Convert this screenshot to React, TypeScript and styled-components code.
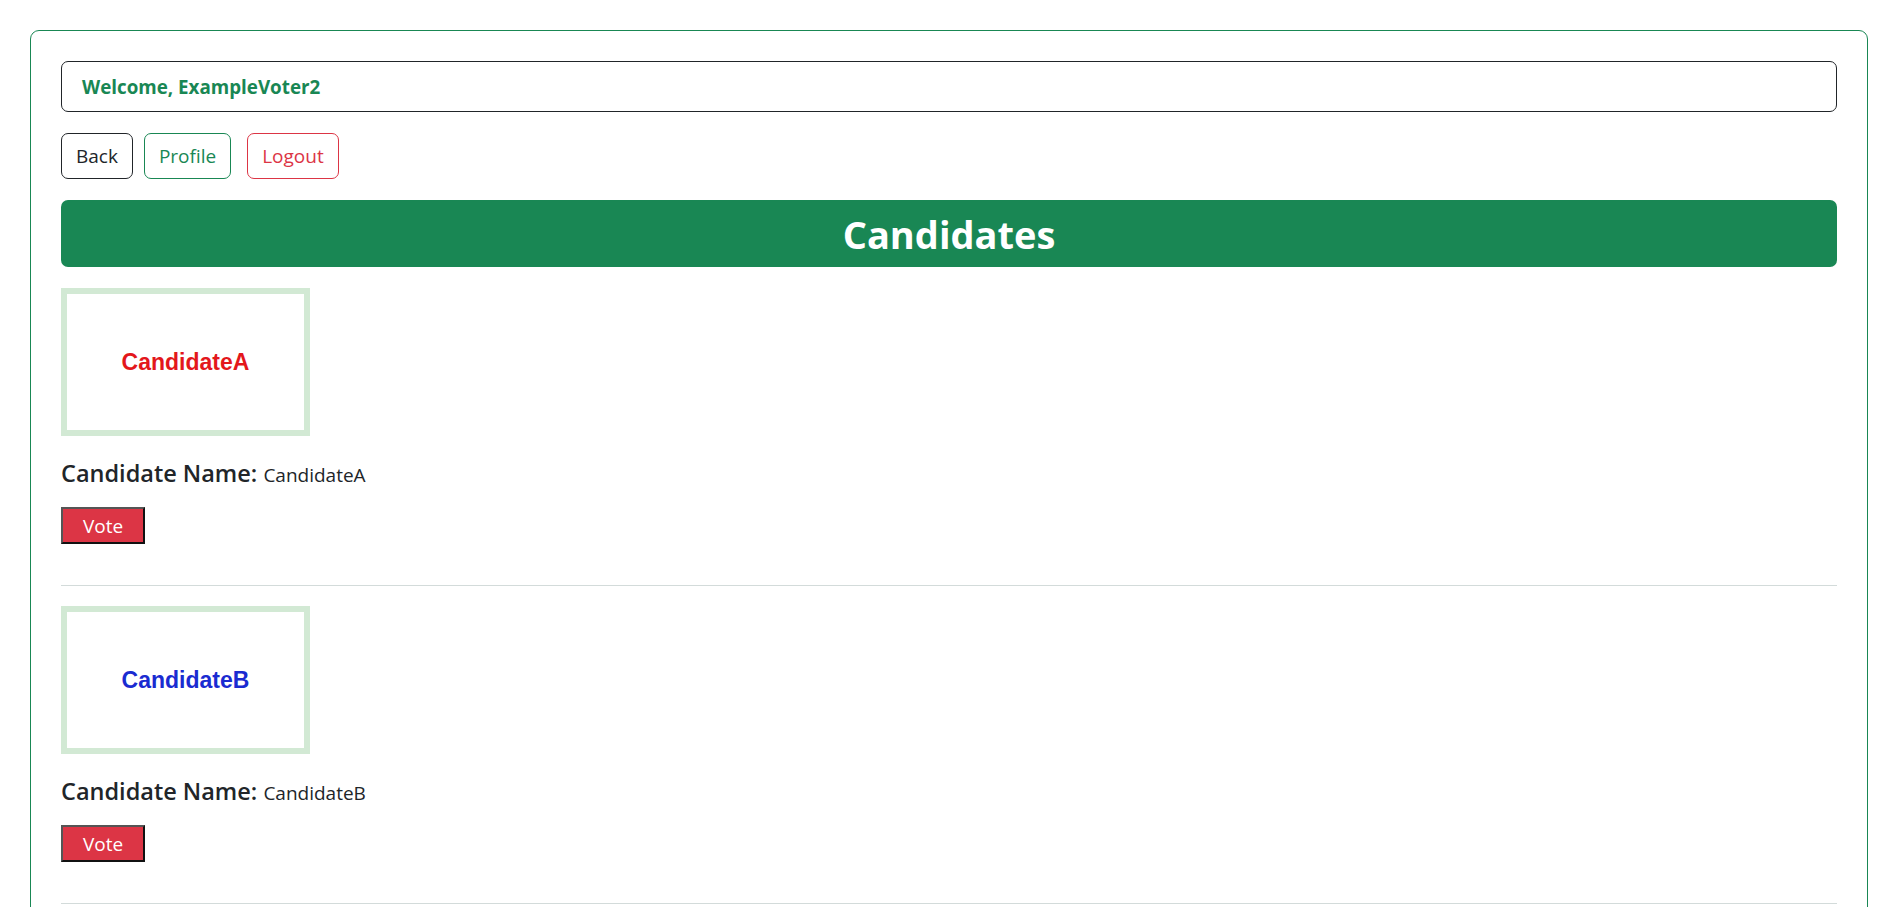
import React from "react";
import styled, { createGlobalStyle } from "styled-components";

const GlobalStyle = createGlobalStyle`
  body {
    margin: 0;
    background: #ffffff;
    font-family: "Open Sans", "Noto Sans", sans-serif;
    color: #212529;
  }
`;

const Card = styled.main`
  margin: 30px 29px 0 30px;
  border: 1px solid #198754;
  border-radius: 9px;
  padding: 30px 30px 40px;
  display: flex;
  flex-direction: column;
`;

const WelcomeBox = styled.div`
  height: 49px;
  border: 1px solid #212529;
  border-radius: 7px;
  padding: 0 20px;
  display: flex;
  align-items: center;
  color: #198754;
  font-weight: 700;
  font-size: 18.8px;
`;

const Toolbar = styled.nav`
  display: flex;
  align-items: center;
  margin-top: 21px;
`;

const OutlineBtn = styled.button<{ tone: string; gap?: number }>`
  height: 46px;
  padding: 0 14px;
  margin-left: ${(p) => p.gap ?? 0}px;
  background: #ffffff;
  border: 1px solid ${(p) => p.tone};
  border-radius: 7px;
  color: ${(p) => p.tone};
  font-family: inherit;
  font-size: 19px;
  cursor: pointer;
`;

const Header = styled.h1`
  margin: 21px 0 0;
  height: 67px;
  border-radius: 7px;
  background: #198754;
  color: #ffffff;
  font-size: 38px;
  font-weight: 700;
  display: flex;
  align-items: center;
  justify-content: center;
`;

const CandidateList = styled.section`
  display: flex;
  flex-direction: column;
  margin-top: 21px;
`;

const CandidateItem = styled.article`
  display: flex;
  flex-direction: column;
  align-items: flex-start;
`;

const Portrait = styled.div<{ ink: string }>`
  width: 237px;
  height: 136px;
  border: 6px solid #d2e9d4;
  display: flex;
  align-items: center;
  justify-content: center;
  color: ${(p) => p.ink};
  font-family: "Liberation Sans", Arial, sans-serif;
  font-weight: 700;
  font-size: 23px;
`;

const NameLine = styled.h5`
  margin: 23px 0 0;
  font-size: 23.5px;
  font-weight: 600;
  line-height: 29px;
`;

const NameValue = styled.span`
  font-size: 19px;
  font-weight: 400;
`;

const VoteBtn = styled.button`
  margin-top: 17px;
  height: 37px;
  padding: 0 20px;
  background: #dc3545;
  color: #ffffff;
  font-family: inherit;
  font-size: 19px;
  border-width: 2px;
  border-style: solid;
  border-color: #555555 #111111 #111111 #555555;
  cursor: pointer;
`;

const Divider = styled.hr`
  width: 100%;
  margin: 41px 0 20px;
  border: none;
  border-top: 1px solid #d3dbda;
`;

const candidates = [
  { name: "CandidateA", ink: "#e3171b" },
  { name: "CandidateB", ink: "#1a2bd1" },
];

export default function App() {
  return (
    <>
      <GlobalStyle />
      <Card>
        <WelcomeBox>Welcome, ExampleVoter2</WelcomeBox>
        <Toolbar>
          <OutlineBtn tone="#212529">Back</OutlineBtn>
          <OutlineBtn tone="#198754" gap={11}>
            Profile
          </OutlineBtn>
          <OutlineBtn tone="#dc3545" gap={16}>
            Logout
          </OutlineBtn>
        </Toolbar>
        <Header>Candidates</Header>
        <CandidateList>
          {candidates.map((c) => (
            <CandidateItem key={c.name}>
              <Portrait ink={c.ink}>{c.name}</Portrait>
              <NameLine>
                Candidate Name: <NameValue>{c.name}</NameValue>
              </NameLine>
              <VoteBtn>Vote</VoteBtn>
              <Divider />
            </CandidateItem>
          ))}
        </CandidateList>
      </Card>
    </>
  );
}
